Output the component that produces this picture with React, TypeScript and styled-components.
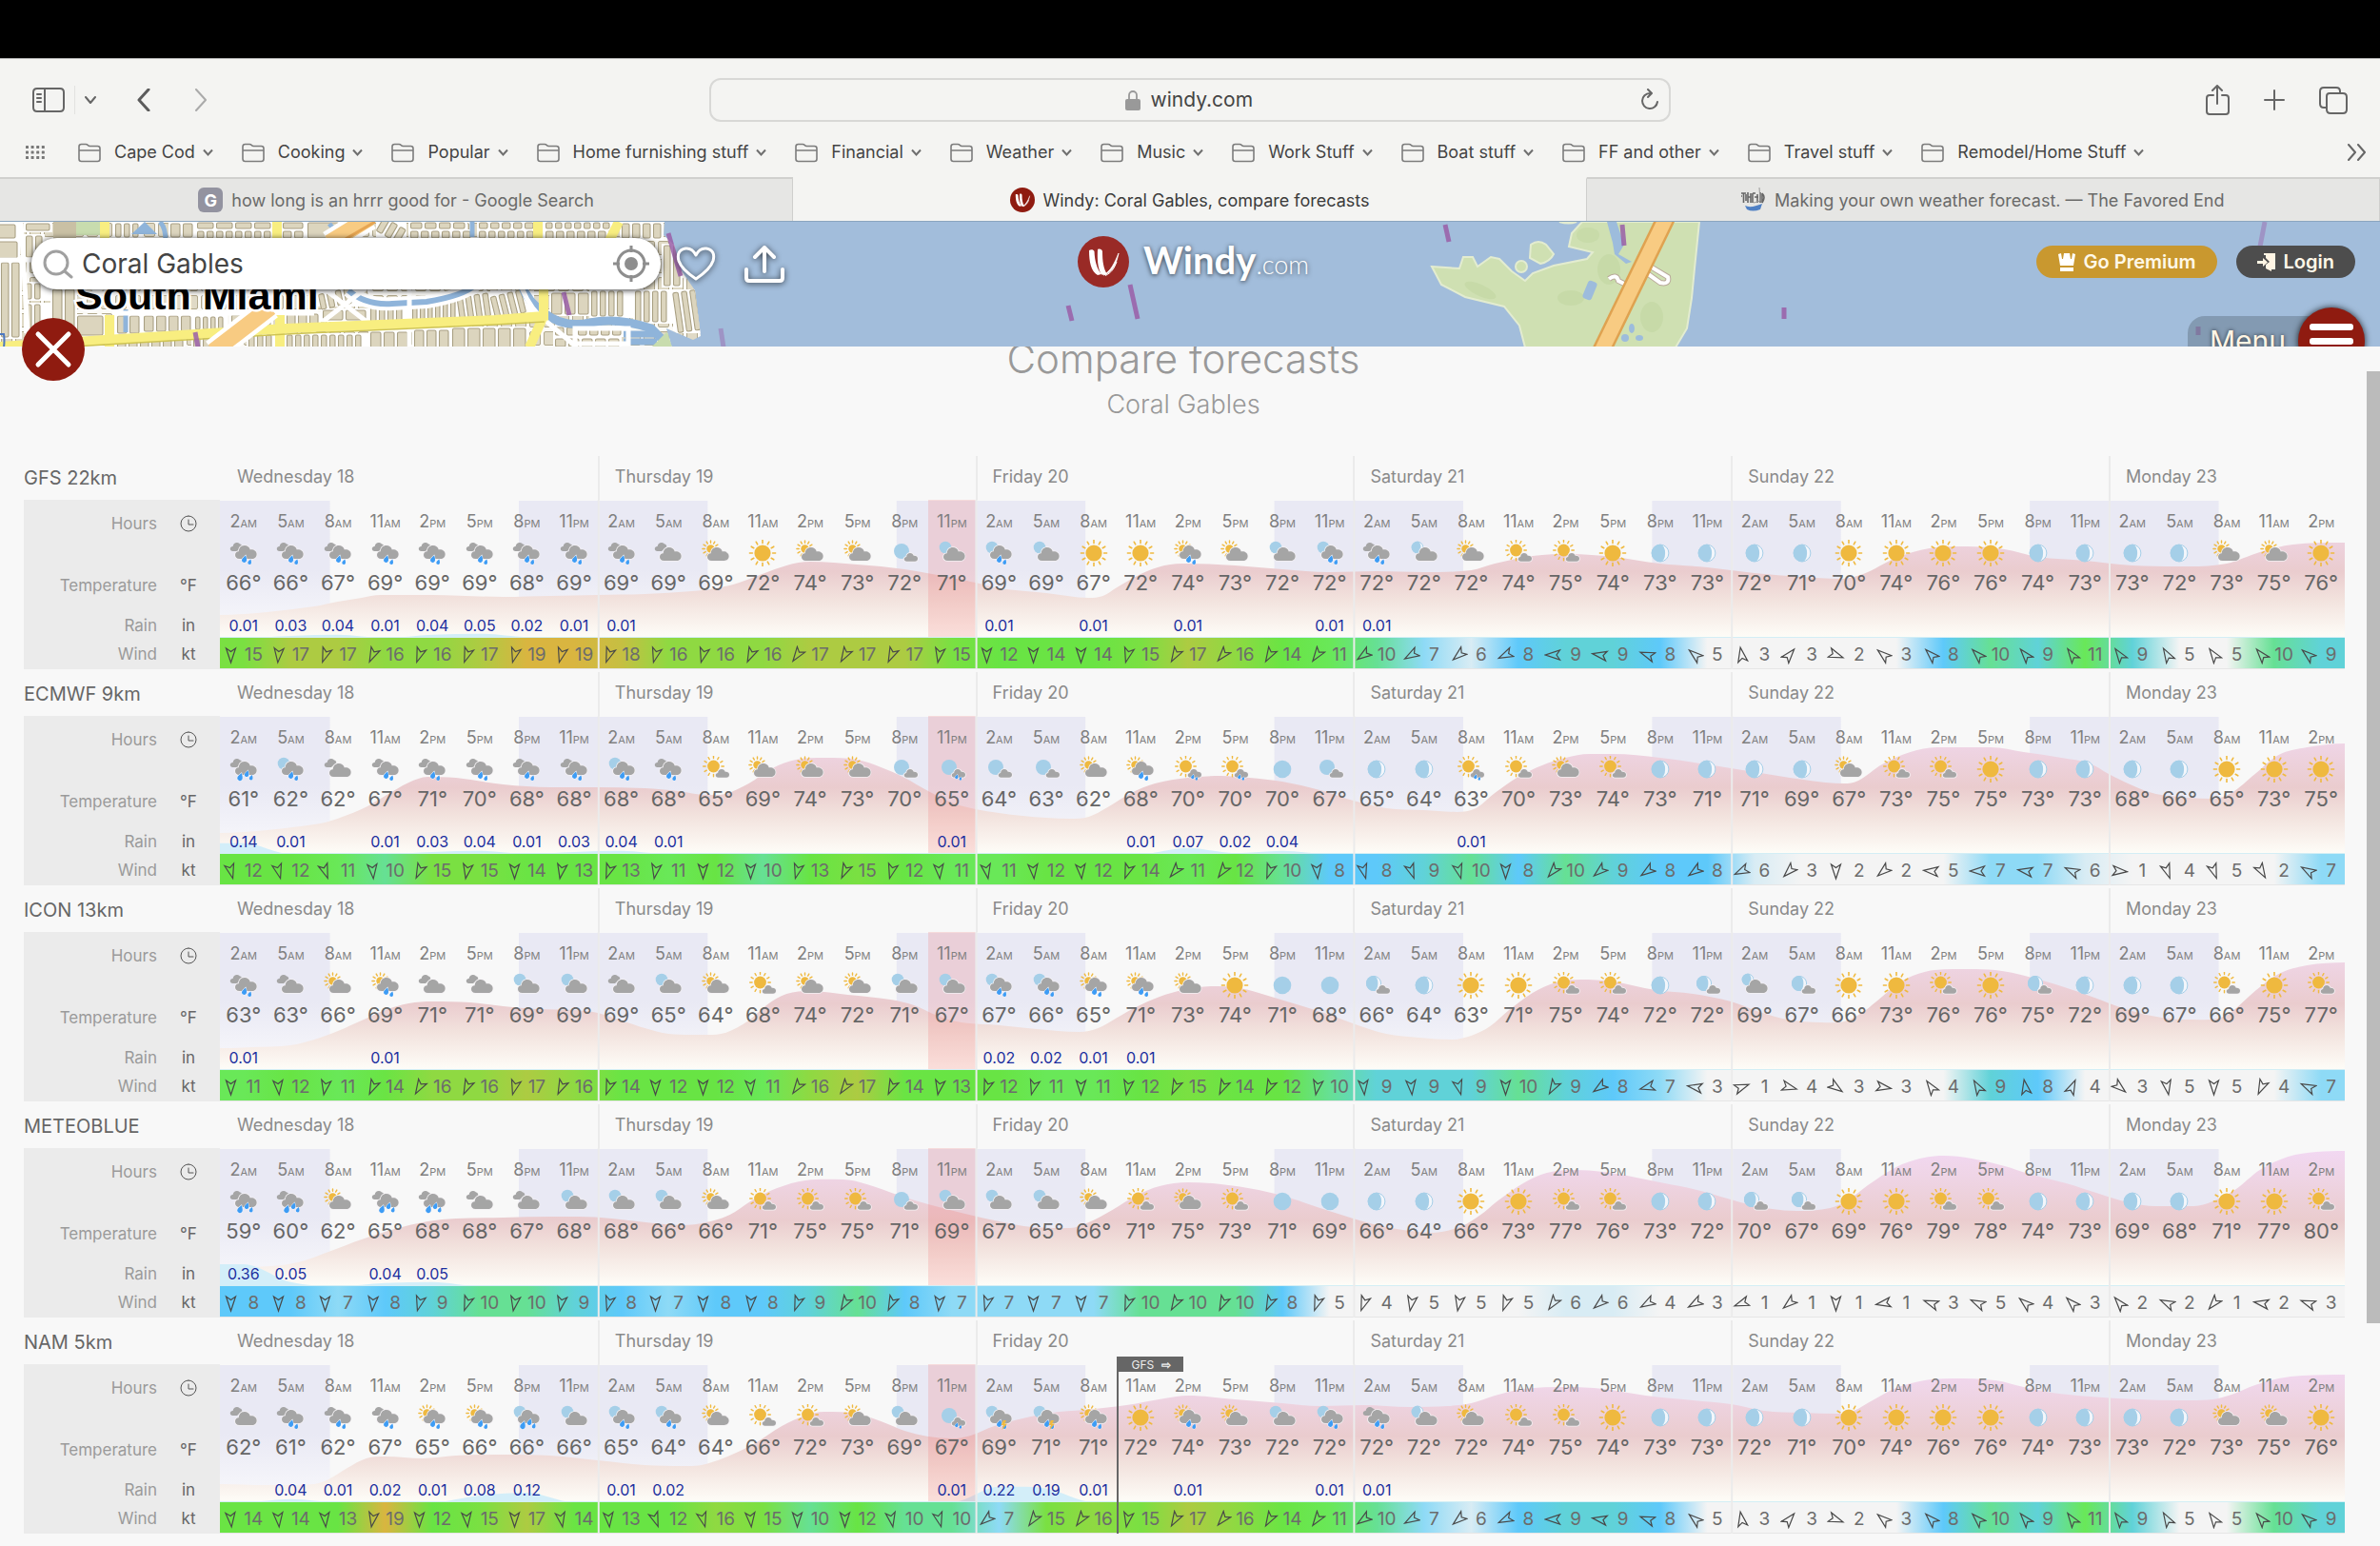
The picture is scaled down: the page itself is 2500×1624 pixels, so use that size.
import React from "react";
import styled, { createGlobalStyle } from "styled-components";

/* ---------- data ---------- */

type IconCode =
  | "R" | "R3" | "CC" | "SC" | "S" | "SR" | "MC" | "MR" | "MR3" | "MT" | "Mc" | "Mcr"
  | "M" | "H" | "HC" | "Hc" | "Sc" | "Scr";

type Point = [number, number];

interface Model {
  name: string;
  icons: IconCode[];
  temps: number[];
  rain: Record<number, number>;
  wind: number[];
  dirs: number[];
  curve: Point[];
  handover?: { column: number; label: string };
}

const COLS = 45;
const COL_W = 50;
const CHART_W = COLS * COL_W;
const BASE_Y = 145;
const NOW_COL = 15;

const days = ["Wednesday 18", "Thursday 19", "Friday 20", "Saturday 21", "Sunday 22", "Monday 23"];
const hourNames = ["2AM", "5AM", "8AM", "11AM", "2PM", "5PM", "8PM", "11PM"];
const hours = Array.from({ length: COLS }, (_, i) => hourNames[i % 8]);

const nums = (s: string) => s.trim().split(/\s+/).map(Number);
const codes = (s: string) => s.trim().split(/\s+/) as IconCode[];
const points = (s: string): Point[] =>
  s.trim().split(/\s+/).map((p) => p.split(",").map(Number) as Point);

const gfsTailIcons = "R HC SC Sc Sc S H H  H H S S S S H H  H H SC SC S";
const gfsTailTemps = "72 72 72 74 75 74 73 73  72 71 70 74 76 76 74 73  73 72 73 75 76";
const gfsTailWind = "10 7 6 8 9 9 8 5  3 3 2 3 8 10 9 11  9 5 5 10 9";
const gfsTailDirs = "55 60 50 65 90 100 110 130  170 220 290 130 135 135 140 145  145 150 145 140 130";

const models: Model[] = [
  {
    name: "GFS 22km",
    icons: codes("R R R R R R R R  R CC SC S SC SC Mc MC  MR MC S S SR SC MC MR " + gfsTailIcons),
    temps: nums("66 66 67 69 69 69 68 69  69 69 69 72 74 73 72 71  69 69 67 72 74 73 72 72 " + gfsTailTemps),
    rain: { 0: 0.01, 1: 0.03, 2: 0.04, 3: 0.01, 4: 0.04, 5: 0.05, 6: 0.02, 7: 0.01, 8: 0.01, 16: 0.01, 18: 0.01, 20: 0.01, 23: 0.01, 24: 0.01 },
    wind: nums("15 17 17 16 16 17 19 19  18 16 16 16 17 17 17 15  12 14 14 15 17 16 14 11 " + gfsTailWind),
    dirs: nums("0 5 20 25 20 20 15 15  20 15 15 25 35 30 25 10  0 0 0 15 30 40 30 35 " + gfsTailDirs),
    curve: points(
      "0,121 1,118 2,112 2.5,107 3,103 3.4,100 4.5,100 6,102 7,101 8,100 9,99 10,96 10.5,93 11,87 12,69 12.5,65 13.5,68 14.5,73 15.5,82 16,87 16.5,93 17.5,98 18.4,103 18.7,101 19,92 19.5,78 20,69 20.5,67 21.5,69 22.5,73 23.5,76 24.5,75 25.5,76 26.5,74 27,67 27.8,59 28.6,57 29.5,60 30.5,67 31.5,71 32.5,77 33.5,81 34.3,83 34.8,78 35.5,61 36.2,51 37,49 37.8,52 38.5,60 39.5,64 40.5,69 41.7,70 42.5,67 43.2,55 43.9,47 45,45"
    ),
  },
  {
    name: "ECMWF 9km",
    icons: codes("R3 MR CC R R R R R  MR R Sc SC SC SC Mc Mcr  Mc Mc SC SR Scr Scr M Mc  H H Scr Sc SC Sc H H  H H SC Sc Sc S H H  H H S S S"),
    temps: nums("61 62 62 67 71 70 68 68  68 68 65 69 74 73 70 65  64 63 62 68 70 70 70 67  65 64 63 70 73 74 73 71  71 69 67 73 75 75 73 73  68 66 65 73 75"),
    rain: { 0: 0.14, 1: 0.01, 3: 0.01, 4: 0.03, 5: 0.04, 6: 0.01, 7: 0.03, 8: 0.04, 9: 0.01, 15: 0.01, 19: 0.01, 20: 0.07, 21: 0.02, 22: 0.04, 26: 0.01 },
    wind: nums("12 12 11 10 15 15 14 13  13 11 12 10 13 15 12 11  11 12 12 14 11 12 10 8  8 9 10 8 10 9 8 8  6 3 2 2 5 7 7 6  1 4 5 2 7"),
    dirs: nums("-15 -15 -20 -5 25 10 0 10  20 10 0 0 15 25 15 -5  -10 -5 -5 20 40 35 20 -5  -15 -20 -15 0 40 50 55 55  65 45 0 50 95 90 100 115  275 -20 -20 -30 120"),
    curve: points(
      "0,123 1,120 2,114 2.3,111 3,98 3.5,84 4,70 4.4,64 5,65 6,72 7,75 8,75 9,76 9.7,79 10.3,83 10.7,82 11.2,71 11.7,55 12.2,46 12.8,44 13.5,46 14,54 14.5,65 15,79 15.5,91 16,98 17,105 18,108 18.4,106 18.8,96 19.3,81 19.8,71 20.5,65 21.2,63 21.8,65 22.5,69 23.3,78 24,89 24.7,97 25.5,99 26.2,101 26.6,97 27,81 27.5,64 28,52 28.5,44 29,40 29.5,40 30.5,44 31.5,51 32,55 33,63 34,70 34.4,71 34.7,68 35.2,51 35.8,38 36.4,33 37.5,33 38.2,38 39,44 39.6,50 40,61 40.5,73 41,82 41.7,86 42.2,87 42.6,81 43.1,61 43.6,41 44.2,33 45,29"
    ),
  },
  {
    name: "ICON 13km",
    icons: codes("R CC SC SR CC CC MC MC  CC MC SC Sc SC SC MC MC  MR MR SR SR SC S M M  Hc H S S Sc Sc H Hc  HC Hc S S Sc S Hc H  H H Sc S Sc"),
    temps: nums("63 63 66 69 71 71 69 69  69 65 64 68 74 72 71 67  67 66 65 71 73 74 71 68  66 64 63 71 75 74 72 72  69 67 66 73 76 76 75 72  69 67 66 75 77"),
    rain: { 0: 0.01, 3: 0.01, 16: 0.02, 17: 0.02, 18: 0.01, 19: 0.01 },
    wind: nums("11 12 11 14 16 16 17 16  14 12 12 11 16 17 14 13  12 11 11 12 15 14 12 10  9 9 9 10 9 8 7 3  1 4 3 3 4 9 8 4  3 5 5 4 7"),
    dirs: nums("0 -5 10 25 30 25 15 25  20 0 0 -5 35 35 25 10  20 15 0 10 25 25 25 10  -5 -5 -15 0 30 55 75 100  250 285 305 280 145 150 170 205  310 -10 0 25 115"),
    curve: points(
      "0,122 0.7,121 1.5,119 2,113 2.5,104 3,93 3.5,82 4,75 4.5,73 5.3,74 6,78 6.7,81 7.5,82 8,85 8.5,93 9,101 9.5,107 10.2,108 10.7,106 11.2,93 11.6,76 12,65 12.5,62 13.3,66 14.2,71 14.7,77 15.2,88 15.7,95 16.5,98 17.3,102 18.2,105 18.6,101 19,90 19.4,79 19.9,68 20.4,61 21,57 21.6,59 22.2,67 23,79 23.5,87 24.1,98 24.7,107 25.4,111 26.1,113 26.5,109 26.9,99 27.3,82 27.8,64 28.3,53 28.8,50 29.5,52 30.4,61 31.2,65 32,73 32.6,84 33.2,92 33.9,95 34.4,94 34.8,84 35.2,68 35.6,52 36.1,42 36.7,39 37.6,40 38.3,47 39,57 39.7,69 40.3,80 40.9,88 41.6,92 42.3,91 42.6,84 43.1,62 43.6,44 44.2,35 45,32"
    ),
  },
  {
    name: "METEOBLUE",
    icons: codes("R3 R3 SC R3 R3 CC CC MC  MC MC SC Sc Sc Sc Mc MC  MC MC SC Sc SC Sc M M  H H S S Sc Sc H H  Hc Hc S S Sc Sc H H  H H S S Sc"),
    temps: nums("59 60 62 65 68 68 67 68  68 66 66 71 75 75 71 69  67 65 66 71 75 73 71 69  66 64 66 73 77 76 73 72  70 67 69 76 79 78 74 73  69 68 71 77 80"),
    rain: { 0: 0.36, 1: 0.05, 3: 0.04, 4: 0.05 },
    wind: nums("8 8 7 8 9 10 10 9  8 7 8 8 9 10 8 7  7 7 7 10 10 10 8 5  4 5 5 5 6 6 4 3  1 1 1 1 3 5 4 3  2 2 1 2 3"),
    dirs: nums("0 0 0 5 15 20 10 10  15 0 0 5 20 30 25 5  15 0 0 20 30 25 25 20  20 10 10 20 35 50 60 60  70 50 0 80 110 115 130 135  140 115 40 100 110"),
    curve: points(
      "0,125 0.5,125 1.3,123 1.8,118 2.3,109 3,96 3.7,85 4.4,77 5,74 6,73 7,72 7.6,72 8.3,74 9.2,79 9.8,81 10.3,78 10.8,70 11.3,54 11.8,42 12.4,34 13.2,33 13.7,38 14.4,50 15,59 15.7,68 16.5,77 17.2,83 18,84 18.4,78 18.9,65 19.4,50 19.9,40 20.5,36 21.2,38 22,44 22.7,53 23.3,63 24,74 24.6,82 25.2,87 25.7,89 26.3,82 26.7,70 27.1,54 27.6,37 28.1,26 28.7,23 29.3,25 29.9,30 30.6,37 31.2,43 32,54 32.6,62 33.4,66 34.1,63 34.5,54 34.9,39 35.5,20 36,11 36.5,8 37.1,11 37.8,19 38.3,27 39.1,37 39.8,48 40.4,57 41,61 41.8,61 42.2,56 42.7,43 43.2,23 43.8,9 44.4,4 45,3"
    ),
  },
  {
    name: "NAM 5km",
    icons: codes("CC R R R SR SR MR3 MC  MR MR SC Sc Sc SC MC Mcr  MT MT SR S SR SC MC MR " + gfsTailIcons),
    temps: nums("62 61 62 67 65 66 66 66  65 64 64 66 72 73 69 67  69 71 71 72 74 73 72 72 " + gfsTailTemps),
    rain: { 1: 0.04, 2: 0.01, 3: 0.02, 4: 0.01, 5: 0.08, 6: 0.12, 8: 0.01, 9: 0.02, 15: 0.01, 16: 0.22, 17: 0.19, 18: 0.01, 20: 0.01, 23: 0.01, 24: 0.01 },
    wind: nums("14 14 13 19 12 15 17 14  13 12 16 15 10 12 10 10  7 15 16 15 17 16 14 11 " + gfsTailWind),
    dirs: nums("-5 -5 -5 10 0 -5 0 -10  -5 -20 -15 -5 0 0 -10 -15  50 35 35 10 30 40 30 35 " + gfsTailDirs),
    curve: points(
      "0,126 1,127 2,126 2.3,121 2.7,109 3.1,99 3.5,97 4.3,99 5,96 6,95 7,96 8,101 9,106 9.8,107 10.2,106 10.7,98 11.3,84 11.9,65 12.4,54 12.8,50 13.5,52 14,60 14.5,70 15,76 15.5,78 15.9,75 16.4,65 17,57 17.6,51 18.3,48 19.2,43 20,36 20.5,33 21.5,37 22.5,41 23.3,44 24.2,43 25.2,45 26,44 26.5,41 27,33 27.6,26 28.5,24 29.3,26 30.2,33 31.2,38 32,42 32.7,49 33.5,51 34.3,52 34.6,49 35,38 35.5,25 36.1,17 36.7,15 37.6,17 38.2,24 38.8,30 39.6,34 40.6,37 41.6,38 42.2,37 42.6,32 43.1,22 43.6,15 44.1,12 45,11"
    ),
    handover: { column: 19, label: "GFS" },
  },
];

/* ---------- helpers ---------- */

const windColor = (kt: number) => {
  if (kt <= 5) return "#f4f4f4";
  const table: Record<number, string> = {
    6: "#d8ecf4", 7: "#8edaf6", 8: "#5ec9fa", 9: "#60d2d8", 10: "#66e094", 11: "#69e858",
    12: "#68e444", 13: "#68e444", 14: "#6ae444", 15: "#7ae042", 16: "#8fd942", 17: "#adcb42", 18: "#c6bf42", 19: "#d9b540",
  };
  return table[kt];
};

const smoothPath = (pts: Point[]) => {
  let d = `M${pts[0][0]} ${pts[0][1]}`;
  const slope = (i: number) => {
    if (i === 0 || i === pts.length - 1) return 0;
    const [x0, y0] = pts[i - 1];
    const [x1, y1] = pts[i];
    const [x2, y2] = pts[i + 1];
    const a = (y1 - y0) / (x1 - x0);
    const b = (y2 - y1) / (x2 - x1);
    return a * b <= 0 ? 0 : (y2 - y0) / (x2 - x0);
  };
  for (let i = 0; i < pts.length - 1; i++) {
    const [x0, y0] = pts[i];
    const [x1, y1] = pts[i + 1];
    const h = (x1 - x0) / 3;
    d += `C${x0 + h} ${y0 + slope(i) * h} ${x1 - h} ${y1 - slope(i + 1) * h} ${x1} ${y1}`;
  }
  return d;
};

const areaPath = (pts: Point[]) => `${smoothPath(pts)}L${CHART_W} ${BASE_Y}L0 ${BASE_Y}Z`;

const rainPoints = (rain: Record<number, number>): Point[] => {
  const top = (i: number) => {
    const r = rain[i] ?? 0;
    return BASE_Y - Math.max(0, 50 * Math.pow(r, 0.6) - 4);
  };
  const pts: Point[] = [[0, top(0)]];
  for (let i = 0; i < COLS; i++) pts.push([(i + 0.5) * COL_W, top(i)]);
  pts.push([CHART_W, BASE_Y]);
  return pts;
};

/* ---------- global ---------- */

const GlobalStyle = createGlobalStyle`
  * { box-sizing: border-box; }
  body { margin: 0; font-family: Inter, "Liberation Sans", sans-serif; background: #f7f7f7; }
  button, input { font: inherit; color: inherit; }
  button { background: none; border: 0; padding: 0; display: inline-flex; align-items: center; justify-content: center; }
  a { color: inherit; text-decoration: none; }
  svg { display: block; flex: none; }
`;

const Page = styled.div`
  height: 100vh;
  display: flex;
  flex-direction: column;
  overflow: hidden;
`;

/* ---------- browser chrome ---------- */

const TopStrip = styled.div`
  height: 61px;
  flex: none;
  background: #000;
`;

const Chrome = styled.header`
  flex: none;
  background: #f4f4f2;
  color: #444;
  border-top: 1px solid #b5b5b5;
`;

const Toolbar = styled.div`
  height: 80px;
  display: grid;
  grid-template-columns: 1fr minmax(0, 1010px) 1fr;
  align-items: center;
  padding: 6px 34px 0;
`;

const ToolGroup = styled.div<{ $end?: boolean; $gap: number }>`
  display: flex;
  align-items: center;
  justify-content: ${(p) => (p.$end ? "flex-end" : "flex-start")};
  gap: ${(p) => p.$gap}px;
`;

const HistoryButtons = styled.div`
  display: flex;
  gap: 46px;
  padding-left: 33px;
`;

const ToolSeparator = styled.span`
  width: 1px;
  height: 30px;
  background: #e2e2e0;
`;

const AddressBar = styled.form`
  height: 46px;
  border: 2px solid #d8d8d6;
  border-radius: 12px;
  display: grid;
  grid-template-columns: 40px 1fr 40px;
  align-items: center;
`;

const AddressCenter = styled.label`
  display: flex;
  align-items: center;
  justify-content: center;
  gap: 11px;
`;

const AddressInput = styled.input`
  width: 110px;
  border: 0;
  padding: 0;
  background: none;
  font-size: 21px;
  line-height: 28px;
  color: #444;
`;

const Bookmarks = styled.nav`
  height: 36px;
  display: flex;
  align-items: center;
  padding: 0 14px 0 27px;
  margin-bottom: 8px;
  font-size: 18px;
  line-height: 24px;
`;

const BookmarkList = styled.div`
  display: flex;
  flex: 1;
  gap: 30px;
  margin-left: 34px;
  overflow: hidden;
`;

const Bookmark = styled.button`
  gap: 8px;
  white-space: nowrap;
  span { margin-left: 6px; }
`;

const Tabs = styled.div`
  display: grid;
  grid-template-columns: repeat(3, 1fr);
  height: 46px;
`;

const Tab = styled.a<{ $active?: boolean }>`
  display: flex;
  align-items: center;
  justify-content: center;
  gap: 9px;
  font-size: 18px;
  white-space: nowrap;
  background: ${(p) => (p.$active ? "#f4f4f2" : "#e6e6e4")};
  color: ${(p) => (p.$active ? "#3c3c3c" : "#6a6a69")};
  border-top: 2px solid ${(p) => (p.$active ? "#f4f4f2" : "#d0d0ce")};
  border-right: 1px solid #cfcfcd;
`;

const TabBadge = styled.span`
  width: 26px;
  height: 26px;
  border-radius: 6px;
  background: #9393a0;
  color: #fff;
  font-weight: 700;
  display: grid;
  place-items: center;
`;

/* ---------- map header ---------- */

const MapArea = styled.section`
  position: relative;
  flex: none;
  height: 132px;
  overflow: hidden;
  background: #a2bddb;
  border-top: 1px solid #8aa5bf;
`;

const MapDrawing = styled.svg`
  position: absolute;
  left: 0;
  top: 0;
  width: 100%;
  height: 132px;
`;

const MapHeader = styled.div`
  position: relative;
  display: grid;
  grid-template-columns: 1fr auto 1fr;
  align-items: center;
  padding: 8px 26px 0 33px;
  height: 76px;
`;

const MapLeft = styled.div`
  display: flex;
  align-items: center;
  padding-top: 4px;
`;

const SearchBox = styled.form`
  width: 661px;
  height: 54px;
  display: flex;
  align-items: center;
  gap: 9px;
  padding: 0 12px;
  background: #fff;
  border-radius: 27px;
  box-shadow: 0 1px 6px rgba(0, 0, 0, 0.8);
`;

const SearchInput = styled.input`
  flex: 1;
  min-width: 0;
  border: 0;
  padding: 0;
  font-size: 28px;
  line-height: 36px;
  color: #444;
`;

const MapAction = styled.button`
  margin-left: 16px;
  filter: drop-shadow(0 1px 3px rgba(0, 0, 0, 0.7));
  & + & { margin-left: 30px; }
`;

const Brand = styled.a`
  display: flex;
  align-items: center;
  font-family: Lato, "Open Sans", sans-serif;
  color: #fff;
  gap: 15px;
  text-shadow: 0 1px 5px rgba(0, 0, 0, 0.7);
`;

const BrandName = styled.span`
  font-size: 40px;
  line-height: 54px;
  font-weight: 700;
  small {
    font-size: 27px;
    font-weight: 300;
  }
`;

const MapRight = styled.div`
  display: flex;
  justify-content: flex-end;
  gap: 20px;
`;

const Pill = styled.button<{ $tone: string }>`
  height: 34px;
  padding: 0 22px;
  gap: 8px;
  border-radius: 17px;
  background: ${(p) => p.$tone};
  color: #fff8e8;
  font-size: 20px;
  font-weight: 600;
`;

const MenuButton = styled.button`
  position: absolute;
  right: 16px;
  top: 90px;
  height: 70px;
  color: #fff5e4;
  font-size: 30px;
  text-shadow: 0 0 4px rgba(0, 0, 0, 0.7);
`;

const MenuLabel = styled.span`
  height: 52px;
  padding: 0 33px 0 23px;
  margin-right: -20px;
  border-radius: 18px 0 0 18px;
  background: rgba(110, 130, 150, 0.6);
  display: grid;
  place-items: center;
`;

const MenuDisc = styled.span`
  position: relative;
  width: 70px;
  height: 70px;
  border-radius: 50%;
  background: #8f1b10;
  box-shadow: 0 0 7px rgba(0, 0, 0, 0.8);
  display: flex;
  flex-direction: column;
  align-items: center;
  justify-content: center;
  gap: 8px;
  i {
    width: 46px;
    height: 7px;
    border-radius: 3px;
    background: #fff;
  }
`;

/* ---------- panel ---------- */

const PanelWrap = styled.div`
  position: relative;
  flex: 1;
  min-height: 0;
`;

const CloseButton = styled.button`
  position: absolute;
  z-index: 2;
  left: 23px;
  top: -30px;
  width: 66px;
  height: 66px;
  border-radius: 50%;
  background: #8f1b10;
`;

const Panel = styled.main`
  height: 100%;
  display: flex;
  overflow: hidden;
  background: #f8f8f8;
`;

const PanelBody = styled.div`
  flex: 1;
  min-width: 0;
`;

const PanelTitle = styled.div`
  display: flow-root;
  height: 112px;
  text-align: center;
  color: #999;
  font-weight: 300;
  h1 {
    margin: -14px 0 2px;
    font-size: 42px;
    line-height: 54px;
    font-weight: 300;
  }
  p {
    margin: 0;
    font-size: 27px;
    line-height: 38px;
  }
`;

const ScrollTrack = styled.div`
  width: 14px;
  padding-top: 26px;
`;

const ScrollThumb = styled.div`
  height: 81%;
  background: #bbb;
`;

/* ---------- forecast blocks ---------- */

const LABELS_W = 206;

const Block = styled.section`
  padding: 0 23px 0 25px;
`;

const BlockHead = styled.div`
  height: 49px;
  display: grid;
  grid-template-columns: ${LABELS_W}px repeat(${COLS}, minmax(0, 1fr));
  font-size: 18px;
  line-height: 22px;
`;

const ModelName = styled.h2`
  margin: 0;
  padding-top: 15px;
  font-size: 20px;
  line-height: 22px;
  font-weight: 400;
  color: #666;
  white-space: nowrap;
`;

const DayName = styled.div<{ $span: number; $first: boolean }>`
  grid-column: span ${(p) => p.$span};
  margin-top: 3px;
  padding: 11px 0 0 16px;
  color: #8a8a8a;
  border-left: 2px solid ${(p) => (p.$first ? "transparent" : "#ebebeb")};
`;

const BlockBody = styled.div`
  position: relative;
  height: 178px;
`;

const ChartLayer = styled.div`
  position: absolute;
  left: ${LABELS_W}px;
  right: 0;
  top: 0;
  bottom: 0;
  svg {
    width: 100%;
    height: 178px;
  }
`;

const Handover = styled.div`
  position: absolute;
  top: -8px;
  bottom: 0;
  border-left: 2px solid #666;
  span {
    width: 68px;
    height: 16px;
    display: flex;
    align-items: center;
    justify-content: center;
    gap: 8px;
    background: #666;
    color: #eee;
    font-size: 12px;
  }
`;

const ForecastTable = styled.table`
  position: relative;
  display: block;
  width: 100%;
  tbody { display: block; }
`;

const Row = styled.tr<{ $h: number; $shift?: number }>`
  display: grid;
  grid-template-columns: 150px 56px repeat(${COLS}, minmax(0, 1fr));
  grid-template-rows: ${(p) => p.$h}px;
  th, td { padding: 0 0 ${(p) => p.$shift ?? 0}px; }
`;

const RowLabel = styled.th<{ $unit?: boolean; $down?: number; $up?: number }>`
  display: flex;
  align-items: center;
  justify-content: ${(p) => (p.$unit ? "center" : "flex-end")};
  background: #ebebeb;
  color: ${(p) => (p.$unit ? "#666" : "#9a9a9a")};
  font-size: 17px;
  font-weight: 400;
  && {
    padding: ${(p) => p.$down ?? 0}px 10px ${(p) => p.$up ?? 0}px 0;
  }
`;

const Cell = styled.td<{ $kind: "hour" | "icon" | "temp" | "rain" }>`
  display: flex;
  align-items: center;
  justify-content: center;
  white-space: nowrap;
  color: ${(p) => ({ hour: "#808080", icon: "#000", temp: "#666", rain: "#1c2f9f" })[p.$kind]};
  font-size: ${(p) => ({ hour: 18, icon: 18, temp: 22, rain: 16 })[p.$kind]}px;
`;

const HourText = styled.span`
  small { font-size: 11px; }
`;

const WindCell = styled.td`
  display: flex;
  align-items: center;
  color: #6c6c6c;
  font-size: 19px;
  && { padding: 2px 0 0 2px; }
  span {
    flex: 1;
    text-align: center;
  }
`;

/* ---------- drawings ---------- */

const CLOUD =
  "M10.5 22C7.6 22 6 20.200 6 18C6 15.800 7.600 14.300 9.700 14.200C10 10.200 12.600 8 15.800 8C18.800 8 21 9.800 21.800 12.400C25.800 12 28.600 14.200 28.600 17.200C28.600 20 26.500 22 23.800 22Z";

const Cloud = ({ small, raised }: { small?: boolean; raised?: boolean }) => (
  <path
    d={CLOUD}
    fill="#a5a5a5"
    stroke="#f4f1f4"
    strokeWidth={small ? 2.4 : 1.6}
    paintOrder="stroke"
    transform={small ? "translate(11 9) scale(.63)" : raised ? "translate(0 -2)" : undefined}
  />
);

const BackCloud = () => (
  <path
    d="M3.500 12C1.800 12 .8 10.800 .8 9.500C.8 8 2 7 3.600 7.100C4 4.200 6 2.800 8.200 3C9.600 3.100 10.500 3.800 11 4.600C12.600 4.800 13.300 6 13.300 7.200L8 12Z"
    fill="#a5a5a5"
  />
);

const DROP = "M0 -3.800C1.400 -1.600 2.200 -.4 2 1.400A2.300 2.300 0 0 1 -2.500 1.200C-2.400 -.8 -1 -2 0 -3.800Z";

const Drops = ({ heavy, small }: { heavy?: boolean; small?: boolean }) => {
  const list = small
    ? [[20, 22, 0.7], [24, 24, 0.55]]
    : heavy
      ? [[11.500, 22.500, 1.200], [18.500, 19, 1], [23, 23, 0.8]]
      : [[16, 20.500, 1.100], [21.500, 23.500, 0.8]];
  return (
    <g fill="#3d9cf5" stroke="#f0f3fa" strokeWidth="1">
      {list.map(([x, y, s]) => (
        <path key={x} d={DROP} paintOrder="stroke" transform={`translate(${x} ${y}) rotate(15) scale(${s})`} />
      ))}
    </g>
  );
};

const SunShape = ({ x, y, r, ray }: { x: number; y: number; r: number; ray: number }) => (
  <g transform={`translate(${x} ${y})`} stroke="#efb93f" strokeLinecap="round" strokeWidth={r > 7 ? 1.600 : 1.400}>
    <circle r={r} fill="#efb93f" stroke="none" />
    {Array.from({ length: 12 }, (_, i) => (
      <path key={i} d={`M0 ${-r - 2}V${-r - 2 - ray}`} transform={`rotate(${i * 30})`} />
    ))}
  </g>
);

const MoonShape = ({ x, y, r, half }: { x: number; y: number; r: number; half?: boolean }) =>
  half ? (
    <g transform={`translate(${x} ${y})`}>
      <circle r={r - 0.4} fill="#f3f6fb" stroke="#a5cfe8" strokeWidth="1" />
      <path d={`M0 ${-r}A${r} ${r} 0 0 0 0 ${r}A${r * 0.55} ${r} 0 0 0 0 ${-r}Z`} fill="#a5cfe8" />
    </g>
  ) : (
    <circle cx={x} cy={y} r={r} fill="#a5cfe8" />
  );

const WeatherIcon = ({ code }: { code: IconCode }) => {
  const first = code[0];
  const smallCloud = code.includes("c");
  const bigCloud = !smallCloud && code.length > 1;
  const wet = code.includes("R") || code === "MT";
  const half = first === "H";
  return (
    <svg width="30" height="28" viewBox="0 0 30 28" role="img" aria-label="weather">
      {first === "S" && (bigCloud ? <SunShape x={9.500} y={9.500} r={4.200} ray={2.400} /> : smallCloud ? <SunShape x={12.500} y={11} r={6.400} ray={2.400} /> : <SunShape x={15} y={14} r={8.600} ray={3} />)}
      {(first === "M" || half) && (bigCloud ? <MoonShape x={8} y={8} r={6.300} half={half} /> : smallCloud ? <MoonShape x={12} y={12} r={8} half={half} /> : <MoonShape x={15} y={14} r={9.300} half={half} />)}
      {(code[0] === "R" || code === "CC") && <BackCloud />}
      {bigCloud || first === "R" ? <Cloud raised={wet} /> : null}
      {smallCloud && <Cloud small />}
      {wet && <Drops heavy={code.includes("3")} />}
      {code.endsWith("cr") && <Drops small />}
      {code === "MT" && <path d="M20 17L17.500 22H20L18.500 27L24 20.500H21.300L23 17Z" fill="#efb93f" />}
    </svg>
  );
};

const WindArrow = ({ dir }: { dir: number }) => (
  <svg width="19" height="20" viewBox="-9.500 -10 19 20" aria-hidden="true">
    <path d="M-5 -7L0 -3.500L5 -7L0 8Z" transform={`rotate(${dir})`} fill="none" stroke="#484848" strokeWidth="1.200" />
  </svg>
);

const WindyMark = ({ size, fill }: { size: number; fill: string }) => (
  <svg width={size} height={size} viewBox="0 0 54 54" aria-hidden="true">
    <circle cx="27" cy="27" r="27" fill={fill} />
    <path d="M12 15C14 14 16.500 14 17.500 16C18 26 20 34 25 40L21 41C14 37 12 27 12 15Z" fill="#fff" />
    <path d="M21 14C23.500 13 25.500 14 26 16C26 26 27 34 31 40C28 41.500 25 41 24 39C21 32 20.500 24 21 14Z" fill="#fff" />
    <path d="M43 18C41 28 37 38 27.500 41C35 36 38.500 29 43 18Z" fill="#fff" stroke="#fff" strokeWidth=".8" />
    <path d="M41 27C38.500 34 35 39 29 41.500" fill="none" stroke="#fff" />
  </svg>
);

const FolderIcon = () => (
  <svg width="24" height="21" viewBox="0 0 24 21" fill="none" stroke="#7c7c7c" strokeWidth="1.600" aria-hidden="true">
    <path d="M1 4Q1 1.500 3.500 1.500H8Q9.500 1.500 10.300 2.500T12.500 3.500H20.500Q23 3.500 23 6V17Q23 19.500 20.500 19.500H3.500Q1 19.500 1 17ZM1 8H23" />
  </svg>
);

const Chevron = () => (
  <svg width="11" height="8" viewBox="0 0 11 8" fill="none" stroke="#6f6f6f" strokeWidth="2" aria-hidden="true">
    <path d="M1 1.500L5.500 6.500L10 1.500" />
  </svg>
);

const Stroke = ({ w, h, d, color = "#666", sw = 2 }: { w: number; h: number; d: string; color?: string; sw?: number }) => (
  <svg width={w} height={h} viewBox={`0 0 ${w} ${h}`} fill="none" stroke={color} strokeWidth={sw} strokeLinecap="round" strokeLinejoin="round" aria-hidden="true">
    <path d={d} />
  </svg>
);

/* Rows of building lots separated by side streets. */
const lots: { x: number; y: number; w: number; h: number; step: number; skew?: number }[] = [
  { x: -4, y: 2, w: 24, h: 16, step: 22 }, { x: -4, y: 20, w: 24, h: 19, step: 24 }, { x: 0, y: 42, w: 22, h: 80, step: 11 },
  { x: 26, y: 1, w: 28, h: 9, step: 28 }, { x: 26, y: 14, w: 20, h: 24, step: 10 }, { x: 26, y: 64, w: 26, h: 18, step: 9 },
  { x: 26, y: 86, w: 26, h: 30, step: 9 }, { x: 54, y: 70, w: 26, h: 42, step: 13 }, { x: 80, y: 98, w: 30, h: 22, step: 30 },
  { x: 120, y: 1, w: 28, h: 16, step: 9 }, { x: 178, y: 1, w: 26, h: 16, step: 13 }, { x: 206, y: 0, w: 80, h: 8, step: 20 },
  { x: 206, y: 9, w: 80, h: 9, step: 10 }, { x: 296, y: 0, w: 24, h: 8, step: 24 }, { x: 296, y: 9, w: 24, h: 9, step: 12 },
  { x: 322, y: 0, w: 36, h: 18, step: 36 }, { x: 396, y: 0, w: 30, h: 18, step: 10, skew: -30 }, { x: 430, y: 0, w: 60, h: 8, step: 15 },
  { x: 430, y: 9, w: 66, h: 9, step: 11 }, { x: 502, y: 0, w: 60, h: 8, step: 12 }, { x: 502, y: 9, w: 60, h: 9, step: 10 },
  { x: 572, y: 0, w: 70, h: 8, step: 10 }, { x: 572, y: 9, w: 66, h: 10, step: 11 }, { x: 652, y: 1, w: 44, h: 17, step: 11 },
  { x: 122, y: 98, w: 26, h: 20, step: 13 }, { x: 150, y: 98, w: 52, h: 18, step: 13 }, { x: 204, y: 99, w: 34, h: 15, step: 8 },
  { x: 242, y: 97, w: 44, h: 13, step: 22 }, { x: 300, y: 96, w: 36, h: 13, step: 12 }, { x: 334, y: 70, w: 54, h: 18, step: 9, skew: 12 },
  { x: 338, y: 92, w: 48, h: 12, step: 24 }, { x: 388, y: 84, w: 44, h: 22, step: 9 }, { x: 432, y: 80, w: 48, h: 25, step: 8 },
  { x: 480, y: 76, w: 36, h: 26, step: 9, skew: 8 }, { x: 516, y: 73, w: 44, h: 26, step: 9, skew: 14 },
  { x: 122, y: 123, w: 72, h: 12, step: 12 }, { x: 202, y: 121, w: 30, h: 14, step: 10 }, { x: 260, y: 118, w: 28, h: 16, step: 9 },
  { x: 300, y: 118, w: 86, h: 18, step: 9 }, { x: 388, y: 115, w: 42, h: 18, step: 14 }, { x: 434, y: 113, w: 40, h: 20, step: 13 },
  { x: 474, y: 111, w: 80, h: 22, step: 16 }, { x: 578, y: 74, w: 42, h: 24, step: 14 }, { x: 620, y: 72, w: 44, h: 28, step: 9 },
  { x: 666, y: 72, w: 44, h: 34, step: 9 }, { x: 582, y: 110, w: 74, h: 10, step: 12 }, { x: 582, y: 122, w: 70, h: 10, step: 14 },
  { x: 696, y: 24, w: 20, h: 44, step: 10 }, { x: 708, y: 72, w: 27, h: 44, step: 9, skew: 8 },
];

const Lots = () => (
  <g fill="#dcd5be" stroke="#a9a083" strokeWidth="1.100">
    {lots.flatMap((l) =>
      Array.from({ length: Math.max(1, Math.floor(l.w / l.step)) }, (_, i) => (
        <rect
          key={`${l.x}-${l.y}-${i}`}
          x={l.x + i * l.step + 1.500}
          y={l.y + 1}
          width={l.step - 3.500}
          height={l.h - 2}
          rx="1.500"
          transform={l.skew ? `rotate(${-l.skew} ${l.x + l.w / 2} ${l.y + l.h / 2})` : undefined}
        />
      ))
    )}
  </g>
);

const CityMap = () => (
  <MapDrawing viewBox="0 0 2500 132" preserveAspectRatio="xMinYMin slice" aria-hidden="true">
    <defs>
      <clipPath id="coast">
        <path d="M0 0H698L697 14L708 24L712 46L730 72L736 120L728 124L700 112L706 132H0Z" />
      </clipPath>
      <pattern id="blocks" width="15" height="19" patternUnits="userSpaceOnUse">
        <rect width="15" height="19" fill="#fbfaf6" />
        <rect x="1.500" y="1.500" width="11" height="14" rx="1.500" fill="#e0dac6" stroke="#b1a88c" strokeWidth="1" />
      </pattern>
    </defs>
    <g clipPath="url(#coast)">
      <rect width="740" height="132" fill="url(#blocks)" />
      <g fill="#fff">
        {lots.map((l, i) => (
          <rect key={i} x={l.x - 1} y={l.y - 1} width={l.w + 2} height={l.h + 2} />
        ))}
      </g>
      <rect x="56" y="0" width="24" height="18" fill="#c9c0a4" />
      <rect x="80" y="0" width="26" height="14" fill="#c8dcae" />
      <Lots />
      <g fill="none" stroke="#8fb4da" strokeWidth="5">
        <path d="M168 0Q174 6 174 20M496 0V16M132 92V116M346 2L354 12" />
        <path d="M366 72Q384 88 412 86L448 84Q486 78 500 66" stroke="#fff" strokeWidth="14" />
        <path d="M366 72Q384 88 412 86L448 84Q486 78 500 66" strokeWidth="6" />
        <path d="M548 66Q554 84 572 96Q592 112 620 106T684 112L704 132" strokeWidth="9" />
        <path d="M655 118H690M655 126H690" strokeWidth="7" />
      </g>
      <path d="M152 0L138 13H165Z" fill="#8fb4da" />
      <path d="M700 116L718 132H684Z" fill="#c8dcae" />
      <g fill="none" stroke="#fff" strokeWidth="5">
        <path d="M22 0L30 132M0 40H60M118 96H330M340 70L384 104M384 70L340 104M430 60V132M350 18L380 0M545 60Q552 84 566 98L606 132M604 112H660V128H604Z" />
      </g>
      <g fill="none" stroke="#f8ee80" strokeWidth="10">
        <path d="M110 0V20M291 0V20M565 0V20M650 0L640 20" />
        <path d="M115 98V132M294 98V132" />
        <path d="M0 131L110 124L300 112L520 103L571 99L571 56M571 99L556 132" />
      </g>
      <g fill="none" stroke="#cfc452" strokeWidth="1.500">
        <path d="M30 134L110 129L300 118L520 108L572 105" />
      </g>
      <path d="M388 -4L346 22M284 90L224 136" stroke="#fff" strokeWidth="26" />
      <path d="M388 -4L346 22M284 90L224 136" stroke="#f8cb82" strokeWidth="17" />
      <path d="M394 0L356 22" stroke="#e6a552" strokeWidth="3" />
      <path d="M0 118H4Q5 124 4 132" fill="none" stroke="#4c78c0" strokeWidth="2" />
    </g>
    <text x="79" y="92" fontFamily="Liberation Sans, Arial, sans-serif" fontWeight="700" fontSize="43" stroke="#fff" strokeWidth="5" paintOrder="stroke" fill="#000">
      South Miami
    </text>
    <g stroke="#e3ecd0" strokeWidth="2" fill="#cfe0b2">
      <path d="M1504 47L1533 49L1537 37H1547L1552 47L1566 37L1575 39L1588 52L1602 62L1610 54L1632 46L1667 39L1673 32L1648 26L1651 12L1662 0H1785L1780 49L1777 80L1772 112L1760 132H1602L1596 109L1580 89L1539 79L1514 66Z" />
      <path d="M1608 24Q1616 18 1624 24L1632 34Q1628 42 1618 44L1607 38Z" />
      <ellipse cx="1598" cy="47" rx="6" ry="6" />
      <path d="M1638 0Q1648 3 1656 0Z" />
    </g>
    <g fill="#b9d097" opacity=".35">
      <ellipse cx="1555" cy="72" rx="18" ry="6" transform="rotate(25 1555 72)" />
      <ellipse cx="1650" cy="80" rx="14" ry="8" />
      <ellipse cx="1690" cy="50" rx="12" ry="16" />
      <ellipse cx="1668" cy="14" rx="12" ry="8" />
      <ellipse cx="1735" cy="100" rx="12" ry="16" />
    </g>
    <g fill="#9dbcdc">
      <path d="M1688 0H1698L1706 24L1700 34L1714 42L1708 44L1696 34L1694 22Z" />
      <rect x="1665" y="62" width="10" height="20" rx="3" transform="rotate(22 1670 72)" />
      <ellipse cx="1714" cy="112" rx="3" ry="5" />
      <ellipse cx="1707" cy="122" rx="4" ry="4" />
      <ellipse cx="1722" cy="122" rx="4" ry="3" />
    </g>
    <path d="M1690 60Q1698 54 1700 62L1712 68M1732 46L1752 58Q1754 66 1744 64L1730 54M1716 66L1724 70" fill="none" stroke="#b9a99a" strokeWidth="6" />
    <path d="M1690 60Q1698 54 1700 62L1712 68M1732 46L1752 58Q1754 66 1744 64L1730 54M1716 66L1724 70" fill="none" stroke="#fff" strokeWidth="4" />
    <path d="M1750 -4L1682 136" stroke="#dfa250" strokeWidth="20" />
    <path d="M1750 -4L1682 136" stroke="#f8cb82" strokeWidth="15" />
    <g stroke="#9a5fa8" strokeWidth="5" opacity=".85">
      <path d="M702 12L715 57M592 74L598 98M205 116L208 132M1122 88L1126 104M1187 66L1195 102M1518 3L1522 21M1704 3L1706 25M1874 90V102M2309 110V119" />
      <path d="M2379 0L2374 26M757 112L760 132" opacity=".5" />
    </g>
  </MapDrawing>
);

/* ---------- sections ---------- */

const ChartSvg = ({ model, id }: { model: Model; id: string }) => {
  const scale = (pts: Point[]): Point[] => pts.map(([c, y]) => [c * COL_W, y]);
  const nights = [[0, 2.33], [6.33, 10.33], [14.33, 18.33], [22.33, 26.33], [30.33, 34.33], [38.33, 42.33]];
  return (
    <svg viewBox={`0 0 ${CHART_W} 178`} preserveAspectRatio="none" aria-hidden="true">
      <defs>
        <linearGradient id={`${id}-night`} x1="0" y1="0" x2="0" y2="1">
          <stop offset=".5" stopColor="#e9e9f4" />
          <stop offset="1" stopColor="#f9f9fc" />
        </linearGradient>
        <linearGradient id={`${id}-temp`} gradientUnits="userSpaceOnUse" x1="0" y1="0" x2="0" y2={BASE_Y}>
          <stop offset="0" stopColor="#f2d8f3" />
          <stop offset=".2" stopColor="#efd5e6" />
          <stop offset=".52" stopColor="#eaccce" />
          <stop offset=".72" stopColor="#f2e2dd" />
          <stop offset="1" stopColor="#fefdf8" />
        </linearGradient>
        <linearGradient id={`${id}-wind`} x1="0" x2="1" y1="0" y2="0">
          {model.wind.map((kt, i) => (
            <stop key={i} offset={(i + 0.5) / COLS} stopColor={windColor(kt)} />
          ))}
        </linearGradient>
      </defs>
      {nights.map(([a, b]) => (
        <rect key={a} x={a * COL_W} y="1" width={(b - a) * COL_W} height={BASE_Y - 1} fill={`url(#${id}-night)`} />
      ))}
      <path d={areaPath(scale(model.curve))} fill={`url(#${id}-temp)`} />
      <path d={areaPath(rainPoints(model.rain))} fill="#d3eef9" />
      <rect x={NOW_COL * COL_W} width={COL_W} height={BASE_Y} fill="#f06a6a" opacity=".2" />
      <rect y={BASE_Y - 1} width={CHART_W} height="1" fill="#d3eef5" />
      <rect y={BASE_Y} width={CHART_W} height="32" fill={`url(#${id}-wind)`} />
      <rect y="177" width={CHART_W} height="1" fill="#e6e6e6" />
      {[8, 16, 24, 32, 40].map((c) => (
        <rect key={c} x={c * COL_W} width="2" height="178" fill="#ebebeb" />
      ))}
    </svg>
  );
};

const ForecastBlock = ({ model, index }: { model: Model; index: number }) => (
  <Block>
    <BlockHead>
      <ModelName>{model.name}</ModelName>
      {days.map((d, i) => (
        <DayName key={d} $span={i === 5 ? 5 : 8} $first={i === 0}>{d}</DayName>
      ))}
    </BlockHead>
    <BlockBody>
      <ChartLayer>
        <ChartSvg model={model} id={`m${index}`} />
      </ChartLayer>
      <ForecastTable>
        <tbody>
          <Row $h={44}>
            <RowLabel scope="row" $down={6}>Hours</RowLabel>
            <RowLabel $unit $down={6}>
              <Stroke w={18} h={18} sw={1} d="M9 1A8 8 0 1 1 9 17A8 8 0 1 1 9 1M9 5V10H14" color="#555" />
            </RowLabel>
            {hours.map((h, i) => (
              <Cell key={i} $kind="hour">
                <HourText>{h.slice(0, -2)}<small>{h.slice(-2)}</small></HourText>
              </Cell>
            ))}
          </Row>
          <Row $h={24}>
            <RowLabel />
            <RowLabel $unit />
            {model.icons.map((c, i) => (
              <Cell key={i} $kind="icon"><WeatherIcon code={c} /></Cell>
            ))}
          </Row>
          <Row $h={50} $shift={12}>
            <RowLabel scope="row" $up={6}>Temperature</RowLabel>
            <RowLabel $unit $up={6}>°F</RowLabel>
            {model.temps.map((t, i) => (
              <Cell key={i} $kind="temp">{t}°</Cell>
            ))}
          </Row>
          <Row $h={27}>
            <RowLabel scope="row">Rain</RowLabel>
            <RowLabel $unit>in</RowLabel>
            {model.temps.map((_, i) => (
              <Cell key={i} $kind="rain">{model.rain[i]?.toFixed(2)}</Cell>
            ))}
          </Row>
          <Row $h={33}>
            <RowLabel scope="row">Wind</RowLabel>
            <RowLabel $unit>kt</RowLabel>
            {model.wind.map((kt, i) => (
              <WindCell key={i}>
                <WindArrow dir={model.dirs[i]} />
                <span>{kt}</span>
              </WindCell>
            ))}
          </Row>
        </tbody>
      </ForecastTable>
      {model.handover && (
        <ChartLayer>
          <Handover style={{ left: `${(model.handover.column / COLS) * 100}%` }}>
            <span>{model.handover.label} <b>⇨</b></span>
          </Handover>
        </ChartLayer>
      )}
    </BlockBody>
  </Block>
);

const bookmarks = [
  "Cape Cod", "Cooking", "Popular", "Home furnishing stuff", "Financial", "Weather", "Music",
  "Work Stuff", "Boat stuff", "FF and other", "Travel stuff", "Remodel/Home Stuff",
];

const BrowserChrome = () => (
  <Chrome>
    <Toolbar>
      <ToolGroup $gap={10}>
        <button aria-label="Sidebar">
          <Stroke w={34} h={26} d="M5 1H29Q33 1 33 5V21Q33 25 29 25H5Q1 25 1 21V5Q1 1 5 1ZM13 1V25M5 7H9M5 11H9M5 15H9" />
        </button>
        <ToolSeparator />
        <button aria-label="Tab groups"><Stroke w={12} h={8} d="M1 1L6 7L11 1" /></button>
        <HistoryButtons>
          <button aria-label="Back"><Stroke w={14} h={24} d="M12 1L2 12L12 23" sw={3} color="#5c5c5c" /></button>
          <button aria-label="Forward"><Stroke w={14} h={24} d="M2 1L12 12L2 23" color="#aaa" /></button>
        </HistoryButtons>
      </ToolGroup>
      <AddressBar>
        <span />
        <AddressCenter>
          <svg width="16" height="21" viewBox="0 0 16 21" aria-hidden="true">
            <rect y="9" width="16" height="12" rx="2" fill="#999" />
            <path d="M4 10V5A4 4 0 0 1 12 5V10" fill="none" stroke="#999" strokeWidth="1.800" />
          </svg>
          <AddressInput aria-label="Address" defaultValue="windy.com" />
        </AddressCenter>
        <button type="button" aria-label="Reload">
          <Stroke w={20} h={24} d="M10 5A8 8 0 1 0 18 14M8 1L12 5L8 9" />
        </button>
      </AddressBar>
      <ToolGroup $end $gap={36}>
        <button aria-label="Share">
          <Stroke w={25} h={32} d="M8 11H4Q1 11 1 14V28Q1 31 4 31H21Q24 31 24 28V14Q24 11 21 11H17M12 20V1M7 6L12 1L17 6" />
        </button>
        <button aria-label="New tab"><Stroke w={22} h={22} d="M11 1V21M1 11H21" /></button>
        <button aria-label="Tab overview">
          <Stroke w={30} h={29} d="M11 7H25Q29 7 29 11V24Q29 28 25 28H12Q8 28 8 24V10Q8 7 11 7ZM8 22H5Q1 22 1 18V5Q1 1 5 1H18Q22 1 22 5V7" />
        </button>
      </ToolGroup>
    </Toolbar>
    <Bookmarks>
      <button aria-label="Favorites">
        <svg width="21" height="15" viewBox="0 0 21 15" fill="#777" aria-hidden="true">
          {[0, 1, 2, 3].flatMap((c) => [0, 1, 2].map((r) => <rect key={`${c}${r}`} x={c * 5.600} y={r * 5.500} width="3" height="3" rx=".6" />))}
        </svg>
      </button>
      <BookmarkList>
        {bookmarks.map((b) => (
          <Bookmark key={b}><FolderIcon /><span>{b}</span><Chevron /></Bookmark>
        ))}
      </BookmarkList>
      <button aria-label="More bookmarks"><Stroke w={21} h={18} d="M2 1L9 9L2 17M12 1L19 9L12 17" /></button>
    </Bookmarks>
    <Tabs>
      <Tab href="#search"><TabBadge>G</TabBadge>how long is an hrrr good for - Google Search</Tab>
      <Tab href="#windy" $active><WindyMark size={26} fill="#8f1b10" />Windy: Coral Gables, compare forecasts</Tab>
      <Tab href="#favored">
        <svg width="26" height="26" viewBox="0 0 26 26" aria-hidden="true">
          <path d="M0 6H5M2.500 6V16M7 5V16M7 10H10M10 6V16M12 6V16M12 6H15M17 7V16M20 5V16M22 6V16M22 6Q26 10 22 16M14 10H18M0 9H1M5 7V14" stroke="#666" strokeWidth="1.600" fill="none" />
          <path d="M19 0L20 14L13 16" stroke="#999" fill="none" />
          <path d="M4 19Q10 22 22 17L20 23Q12 26 6 23Z" fill="#4f80c4" />
        </svg>
        Making your own weather forecast. — The Favored End
      </Tab>
    </Tabs>
  </Chrome>
);

const MapTop = () => (
  <MapArea>
    <CityMap />
    <MenuButton>
      <MenuLabel>Menu</MenuLabel>
      <MenuDisc><i /><i /><i /></MenuDisc>
    </MenuButton>
    <MapHeader>
      <MapLeft>
        <SearchBox>
          <Stroke w={32} h={32} d="M14 3A12 12 0 1 1 14 27A12 12 0 1 1 14 3M23 24L30 30" color="#a0a0a0" sw={3} />
          <SearchInput aria-label="Search location" defaultValue="Coral Gables" />
          <button type="button" aria-label="Locate me">
            <svg width="38" height="38" viewBox="0 0 38 38" fill="none" stroke="#8e8e8e" strokeWidth="3" aria-hidden="true">
              <circle cx="19" cy="19" r="14" />
              <circle cx="19" cy="19" r="7" fill="#8e8e8e" stroke="none" />
              <path d="M19 0V7M19 31V38M0 19H7M31 19H38" />
            </svg>
          </button>
        </SearchBox>
        <MapAction aria-label="Favorite">
          <Stroke w={42} h={36} sw={3} color="#fff" d="M21 34Q6 24 3 15Q0 4 10 2Q17 1 21 9Q25 1 32 2Q42 4 39 15Q36 24 21 34Z" />
        </MapAction>
        <MapAction aria-label="Share location">
          <Stroke w={42} h={42} sw={4} color="#fff" d="M2 27V36Q2 39 5 39H37Q40 39 40 36V27M21 29V4M11 14L21 4L31 14" />
        </MapAction>
      </MapLeft>
      <Brand href="#home">
        <WindyMark size={54} fill="#992a26" />
        <BrandName>Windy<small>.com</small></BrandName>
      </Brand>
      <MapRight>
        <Pill $tone="#c9982f">
          <svg width="20" height="19" viewBox="0 0 20 19" fill="#fff" aria-hidden="true">
            <path d="M3 13L1 1L4 0L5 6H6L7 0H13L14 6H15L16 0L19 1L17 13ZM3 15H17V19H3Z" />
          </svg>
          Go Premium
        </Pill>
        <Pill $tone="#4d4d4d">
          <svg width="20" height="19" viewBox="0 0 20 19" fill="#fff5e4" aria-hidden="true">
            <path d="M7 0H19V17H15V19L9 16V12L13 9L9 5V2H7ZM0 8H6V5L11 9.500L6 14V11H0Z" />
          </svg>
          Login
        </Pill>
      </MapRight>
    </MapHeader>
  </MapArea>
);

export default function App() {
  return (
    <Page>
      <GlobalStyle />
      <TopStrip />
      <BrowserChrome />
      <MapTop />
      <PanelWrap>
        <CloseButton aria-label="Close">
          <Stroke w={40} h={40} sw={5} color="#fff" d="M4 4L36 36M36 4L4 36" />
        </CloseButton>
        <Panel>
          <PanelBody>
            <PanelTitle>
              <h1>Compare forecasts</h1>
              <p>Coral Gables</p>
            </PanelTitle>
            {models.map((m, i) => (
              <ForecastBlock key={m.name} model={m} index={i} />
            ))}
          </PanelBody>
          <ScrollTrack><ScrollThumb /></ScrollTrack>
        </Panel>
      </PanelWrap>
    </Page>
  );
}
